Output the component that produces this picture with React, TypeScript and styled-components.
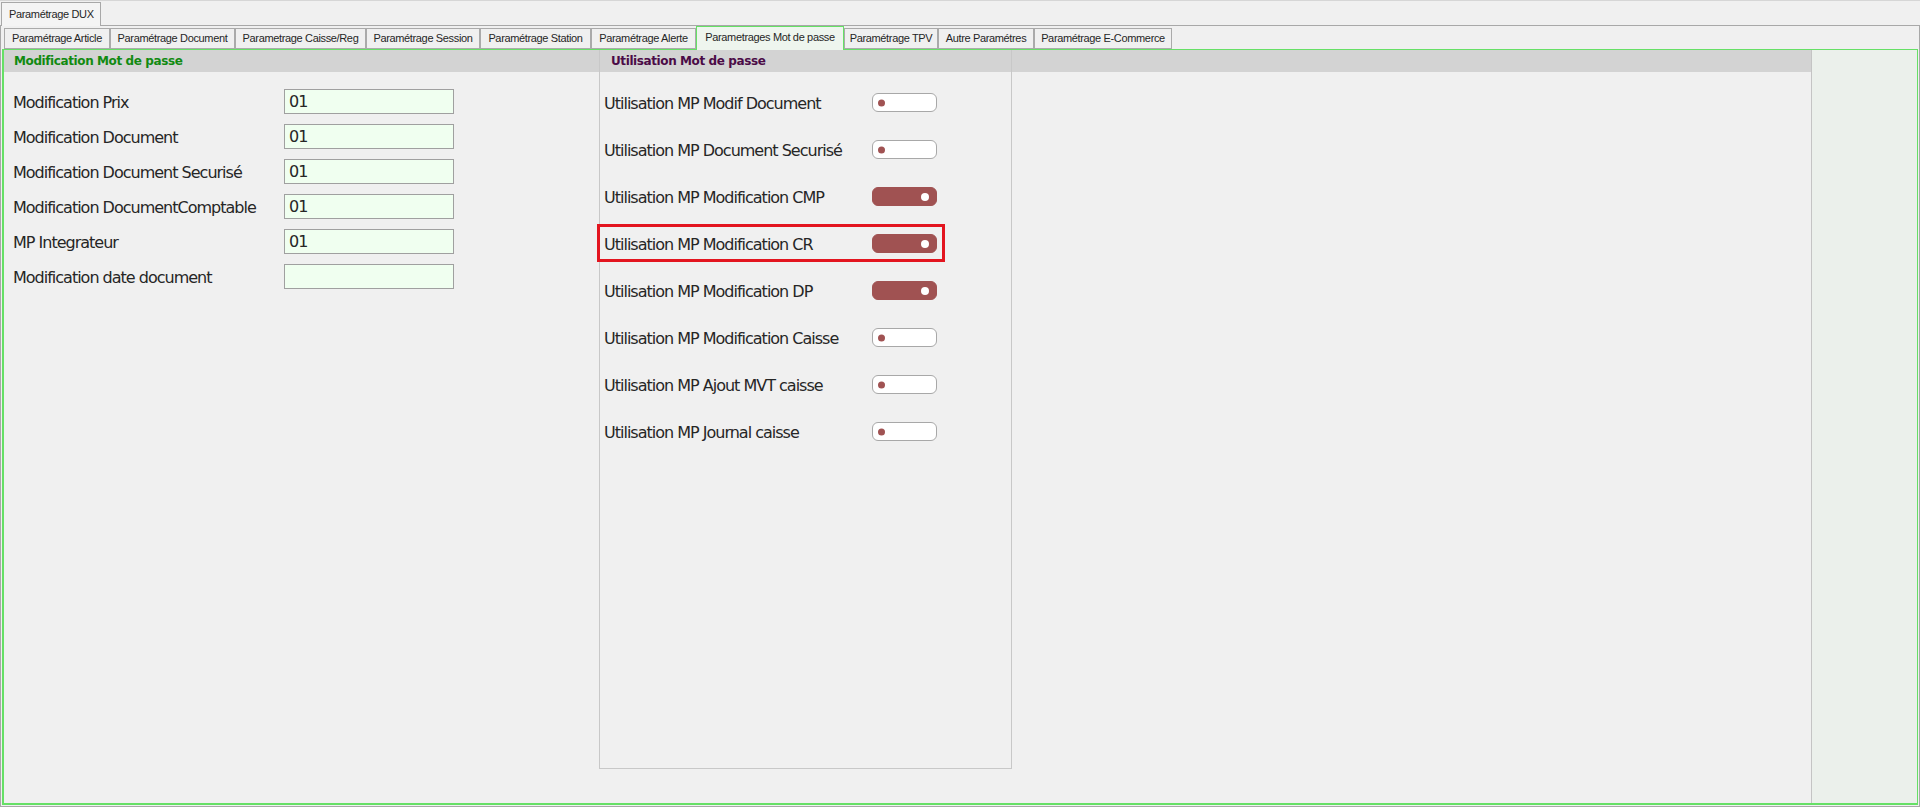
import { Fragment } from 'react';
import styled, { createGlobalStyle } from 'styled-components';

const GlobalStyle = createGlobalStyle`
  html, body {
    margin: 0;
    padding: 0;
    background: #f0f0f0;
  }
  body {
    font-family: "DejaVu Sans", "Liberation Sans", sans-serif;
    color: #262626;
  }
  * {
    box-sizing: border-box;
  }
`;

const Window = styled.div`
  height: 807px;
  display: flex;
  flex-direction: column;
  border-top: 1px solid #d6d6d6;
`;

const OuterTabBar = styled.div`
  height: 24px;
  display: flex;
  align-items: flex-end;
  padding-left: 1px;
`;

const OuterTab = styled.div`
  position: relative;
  z-index: 1;
  width: 100px;
  height: 24px;
  margin-bottom: -1px;
  padding-left: 7px;
  line-height: 22px;
  font-family: "Liberation Sans", Arial, sans-serif;
  font-size: 11px;
  letter-spacing: -0.35px;
  background: #f4f4f4;
  border: 1px solid #a8a8a8;
  border-bottom: none;
`;

const OuterPanel = styled.div`
  flex: 1;
  display: flex;
  flex-direction: column;
  border: 1px solid #a8a8a8;
  padding: 0 1px 1px 1px;
`;

const TabStrip = styled.div`
  height: 23px;
  display: flex;
  align-items: flex-end;
  padding-left: 2px;
`;

const Tab = styled.div<{ $w: number; $active?: boolean }>`
  position: relative;
  width: ${(p) => p.$w}px;
  height: ${(p) => (p.$active ? 24 : 21)}px;
  margin-bottom: ${(p) => (p.$active ? -1 : 0)}px;
  z-index: ${(p) => (p.$active ? 2 : 0)};
  font-family: "Liberation Sans", Arial, sans-serif;
  font-size: 11px;
  letter-spacing: -0.35px;
  line-height: ${(p) => (p.$active ? 21 : 19)}px;
  text-align: center;
  white-space: nowrap;
  overflow: hidden;
  background: ${(p) => (p.$active ? '#eef5ee' : '#f0f0f0')};
  border: 1px solid ${(p) => (p.$active ? '#66e066' : '#aaaaaa')};
  border-bottom: ${(p) => (p.$active ? 'none' : '1px solid #aaaaaa')};
`;

const GreenPanel = styled.div`
  flex: 1;
  display: flex;
  border: 1px solid #66e066;
  border-left-width: 2px;
  border-bottom-width: 2px;
`;

const Main = styled.div`
  flex: 1;
  display: flex;
  align-items: flex-start;
`;

const RightStrip = styled.div`
  width: 106px;
  background: #ebf0eb;
  border-left: 1px solid #c4c4c4;
`;

const Column = styled.div<{ $w?: number; $boxed?: boolean }>`
  ${(p) => (p.$w ? `width: ${p.$w}px;` : 'flex: 1;')}
  ${(p) =>
    p.$boxed &&
    `
    height: 719px;
    border: 1px solid #c8c8c8;
    border-top: none;
  `}
`;

const Header = styled.div<{ $color: string; $pad: number }>`
  height: 22px;
  line-height: 22px;
  padding-left: ${(p) => p.$pad}px;
  background: #d3d3d3;
  color: ${(p) => p.$color};
  font-size: 12px;
  font-weight: bold;
  letter-spacing: -0.4px;
  white-space: nowrap;
`;

const FieldGrid = styled.div`
  display: grid;
  grid-template-columns: 271px 170px;
  grid-auto-rows: 25px;
  row-gap: 10px;
  padding: 17px 0 0 9px;
  align-items: center;
`;

const Label = styled.span`
  padding-top: 2px;
  font-size: 16px;
  letter-spacing: -1px;
  white-space: nowrap;
`;

const TextBox = styled.div`
  height: 25px;
  padding-left: 4px;
  line-height: 24px;
  font-size: 16px;
  letter-spacing: -1px;
  background: #f0fff0;
  border: 1px solid #a0a0a0;
`;

const ToggleList = styled.div`
  padding: 7px 0 0 4px;
`;

const ToggleRow = styled.div`
  position: relative;
  height: 47px;
  display: grid;
  grid-template-columns: 268px 65px;
  align-items: center;
`;

const Highlight = styled.div`
  position: absolute;
  top: 4px;
  left: -7px;
  width: 348px;
  height: 38px;
  border: 3px solid #e3151f;
  pointer-events: none;
`;

const Switch = styled.div<{ $on: boolean }>`
  position: relative;
  width: 65px;
  height: 19px;
  border-radius: 6px;
  background: ${(p) => (p.$on ? '#a05252' : '#ffffff')};
  border: 1px solid ${(p) => (p.$on ? '#a05252' : '#a8a8a8')};

  &::after {
    content: '';
    position: absolute;
    top: 50%;
    width: ${(p) => (p.$on ? 8 : 7)}px;
    height: ${(p) => (p.$on ? 8 : 7)}px;
    border-radius: 50%;
    transform: translateY(-50%);
    background: ${(p) => (p.$on ? '#ffffff' : '#a05252')};
    ${(p) => (p.$on ? 'right: 7px;' : 'left: 5px;')}
  }
`;

const tabs = [
  { label: 'Paramétrage Article', w: 106 },
  { label: 'Paramétrage Document', w: 125 },
  { label: 'Parametrage Caisse/Reg', w: 131 },
  { label: 'Paramétrage Session', w: 114 },
  { label: 'Paramétrage Station', w: 111 },
  { label: 'Paramétrage Alerte', w: 105 },
  { label: 'Parametrages Mot de passe', w: 148, active: true },
  { label: 'Paramétrage TPV', w: 94 },
  { label: 'Autre Paramétres', w: 96 },
  { label: 'Paramétrage E-Commerce', w: 138 },
];

const fields = [
  { label: 'Modification Prix', value: '01' },
  { label: 'Modification Document', value: '01' },
  { label: 'Modification Document Securisé', value: '01' },
  { label: 'Modification DocumentComptable', value: '01' },
  { label: 'MP Integrateur', value: '01' },
  { label: 'Modification date document', value: '' },
];

const toggles = [
  { label: 'Utilisation MP Modif Document', on: false },
  { label: 'Utilisation MP Document Securisé', on: false },
  { label: 'Utilisation MP Modification CMP', on: true },
  { label: 'Utilisation MP Modification CR', on: true, marked: true },
  { label: 'Utilisation MP Modification DP', on: true },
  { label: 'Utilisation MP Modification Caisse', on: false },
  { label: 'Utilisation MP Ajout MVT caisse', on: false },
  { label: 'Utilisation MP Journal caisse', on: false },
];

export default function App() {
  return (
    <>
      <GlobalStyle />
      <Window>
        <OuterTabBar>
          <OuterTab>Paramétrage DUX</OuterTab>
        </OuterTabBar>
        <OuterPanel>
          <TabStrip>
            {tabs.map((t) => (
              <Tab key={t.label} $w={t.w} $active={t.active}>
                {t.label}
              </Tab>
            ))}
          </TabStrip>
          <GreenPanel>
            <Main>
              <Column $w={595}>
                <Header $color="#118a11" $pad={10}>
                  Modification Mot de passe
                </Header>
                <FieldGrid>
                  {fields.map((f) => (
                    <Fragment key={f.label}>
                      <Label>{f.label}</Label>
                      <TextBox>{f.value}</TextBox>
                    </Fragment>
                  ))}
                </FieldGrid>
              </Column>
              <Column $w={413} $boxed>
                <Header $color="#4b0b47" $pad={11}>
                  Utilisation Mot de passe
                </Header>
                <ToggleList>
                  {toggles.map((t) => (
                    <ToggleRow key={t.label}>
                      <Label>{t.label}</Label>
                      <Switch $on={t.on} />
                      {t.marked && <Highlight />}
                    </ToggleRow>
                  ))}
                </ToggleList>
              </Column>
              <Column>
                <Header $color="#333" $pad={10} />
              </Column>
            </Main>
            <RightStrip />
          </GreenPanel>
        </OuterPanel>
      </Window>
    </>
  );
}
